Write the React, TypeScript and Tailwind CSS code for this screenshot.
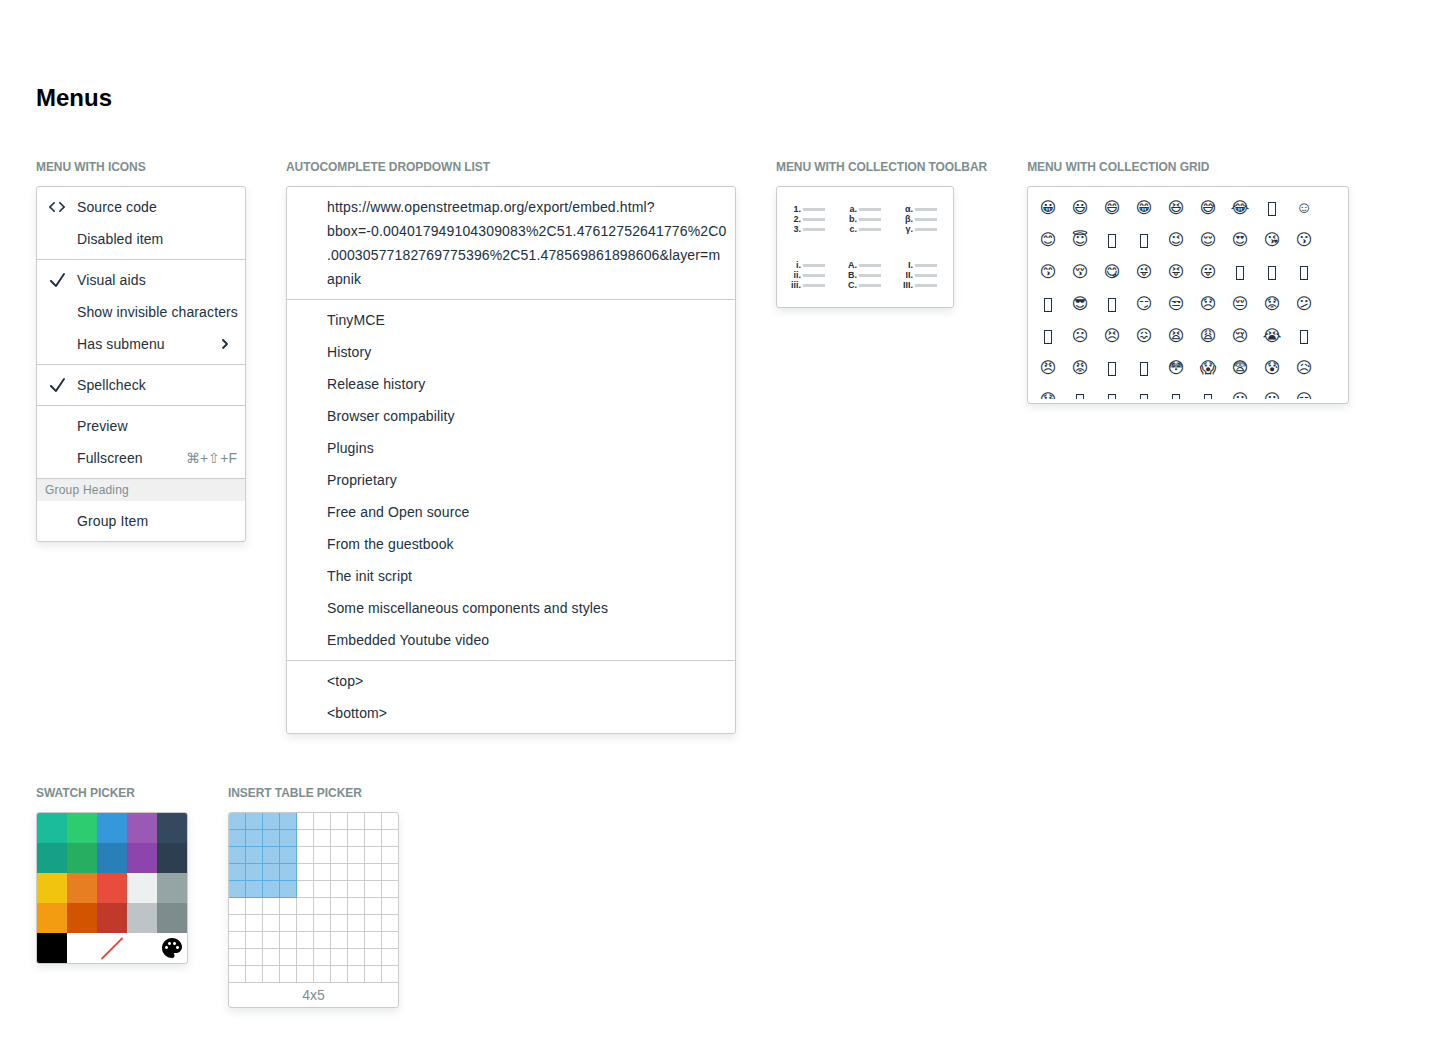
import React from 'react';
import { MdPalette } from 'react-icons/md';

const menuBox = 'bg-white border border-[#cccccc] rounded-[3px] shadow-[0_4px_8px_0_rgba(34,47,62,0.1)] overflow-hidden';
const sectionLabel = 'mb-[11px] text-xs leading-[16px] font-bold text-[#7e8e8e] whitespace-nowrap tracking-[-0.07px]';

const CodeIcon = () => (
  <svg width="24" height="24" viewBox="0 0 24 24" fill="#222f3e">
    <path d="M9.8 15.7c.3.3.3.8 0 1-.3.4-.9.4-1.2 0l-4.4-4.1a.8.8 0 0 1 0-1.2l4.4-4.2c.3-.3.9-.3 1.2 0 .3.3.3.8 0 1.1L6 12l3.8 3.7zm4.4 0c-.3.3-.3.8 0 1 .3.4.9.4 1.2 0l4.4-4.1a.8.8 0 0 0 0-1.2l-4.4-4.2a.8.8 0 0 0-1.2 0c-.3.3-.3.8 0 1.1L18 12l-3.8 3.7z" />
  </svg>
);

const CheckIcon = () => (
  <svg width="24" height="24" viewBox="0 0 24 24" fill="#222f3e">
    <path d="M18.2 5.4a1 1 0 0 1 1.6 1.2l-8 12a1 1 0 0 1-1.5.1l-5-5a1 1 0 1 1 1.4-1.4l4.1 4.1 7.4-11z" />
  </svg>
);

const ChevronIcon = () => (
  <svg className="mr-1" width="16" height="16" viewBox="0 0 16 16" fill="#222f3e">
    <path d="M5.3 3.3a1 1 0 0 1 1.4 0l4 4c.4.4.4 1 0 1.4l-4 4a1 1 0 0 1-1.4-1.4L8.6 8 5.3 4.7a1 1 0 0 1 0-1.4z" />
  </svg>
);

const Item = ({ label, icon, right }: { label: string; icon?: React.ReactNode; right?: React.ReactNode }) => (
  <div className="flex h-8 items-center px-2 text-sm tracking-[0.12px] text-[#222f3e]">
    <div className="mr-2 flex w-6 shrink-0 justify-center">{icon}</div>
    <span className="whitespace-nowrap">{label}</span>
    {right && <div className="ml-auto flex items-center">{right}</div>}
  </div>
);

const Group = ({ children, last }: { children: React.ReactNode; last?: boolean }) => (
  <div className={last ? 'py-1' : 'py-1 border-b border-[#cccccc]'}>{children}</div>
);

const IconsMenu = () => (
  <div className={`${menuBox} w-[210px]`}>
    <Group>
      <Item label="Source code" icon={<CodeIcon />} />
      <Item label="Disabled item" />
    </Group>
    <Group>
      <Item label="Visual aids" icon={<CheckIcon />} />
      <Item label="Show invisible characters" />
      <Item label="Has submenu" right={<ChevronIcon />} />
    </Group>
    <Group>
      <Item label="Spellcheck" icon={<CheckIcon />} />
    </Group>
    <Group>
      <Item label="Preview" />
      <Item label="Fullscreen" right={<span className="tracking-normal text-[#7e8e8e]">⌘+⇧+F</span>} />
    </Group>
    <div className="h-[22px] bg-[#f0f0f0] px-2 text-xs leading-[22px] tracking-[0.2px] text-[#7e8e8e]">Group Heading</div>
    <Group last>
      <Item label="Group Item" />
    </Group>
  </div>
);

const autocompleteLinks = [
  'TinyMCE',
  'History',
  'Release history',
  'Browser compability',
  'Plugins',
  'Proprietary',
  'Free and Open source',
  'From the guestbook',
  'The init script',
  'Some miscellaneous components and styles',
  'Embedded Youtube video',
];

const AutocompleteMenu = () => (
  <div className={`${menuBox} w-[450px]`}>
    <Group>
      <div className="py-1 pr-2 pl-10 text-sm leading-6 tracking-[0.15px] text-[#222f3e] break-words">
        https://www.openstreetmap.org/export/embed.html?bbox=-0.004017949104309083%2C51.47612752641776%2C0.00030577182769775396%2C51.478569861898606&amp;layer=mapnik
      </div>
    </Group>
    <Group>
      {autocompleteLinks.map(link => (
        <Item key={link} label={link} />
      ))}
    </Group>
    <Group last>
      <Item label="<top>" />
      <Item label="<bottom>" />
    </Group>
  </div>
);

const listStyles = [
  ['1.', '2.', '3.'],
  ['a.', 'b.', 'c.'],
  ['α.', 'β.', 'γ.'],
  ['i.', 'ii.', 'iii.'],
  ['A.', 'B.', 'C.'],
  ['I.', 'II.', 'III.'],
];

const ListIcon = ({ marks }: { marks: string[] }) => (
  <div className="flex h-14 w-14 flex-col items-end justify-center gap-[2px] pr-[12px]">
    {marks.map(mark => (
      <div key={mark} className="flex h-2 items-center">
        <span className="mr-[2px] text-[9px] leading-2 font-bold text-[#222f3e]">{mark}</span>
        <span className="h-[3px] w-[22px] bg-[#cfd2d5]" />
      </div>
    ))}
  </div>
);

const ToolbarMenu = () => (
  <div className={`${menuBox} w-[178px] p-1`}>
    <div className="flex flex-wrap">
      {listStyles.map(marks => (
        <ListIcon key={marks[0]} marks={marks} />
      ))}
    </div>
  </div>
);

// '' stands for a character the font has no glyph for, shown as an empty box
const emojis = [
  '😀', '😃', '😄', '😁', '😆', '😅', '😂', '', '☺',
  '😊', '😇', '', '', '😉', '😌', '😍', '😘', '😗',
  '😙', '😚', '😋', '😜', '😝', '😛', '', '', '',
  '', '😎', '', '😏', '😒', '😞', '😔', '😟', '😕',
  '', '☹', '😣', '😖', '😫', '😩', '😢', '😭', '',
  '😠', '😡', '', '', '😳', '😱', '😨', '😰', '😥',
  '😓', '', '', '', '', '', '😶', '😐', '😑',
];

const EmojiMenu = () => (
  <div className={`${menuBox} w-[322px] p-1`}>
    <div className="h-[208px] overflow-hidden">
      <div className="flex flex-wrap">
        {emojis.map((emoji, i) => (
          <div
            key={i}
            className={
              emoji === '☺'
                ? "flex h-8 w-8 items-center justify-center pt-[2px] font-['Liberation_Sans'] text-base text-[#222f3e]"
                : "flex h-8 w-8 items-center justify-center pt-[2px] font-['DejaVu_Sans'] text-base text-[#222f3e]"
            }
          >
            {emoji ? emoji + '\uFE0E' : <span className="mt-[1px] h-[14px] w-[8px] border border-[#222f3e]" />}
          </div>
        ))}
      </div>
    </div>
  </div>
);

const swatches = [
  '#1abc9c', '#2ecc71', '#3498db', '#9b59b6', '#34495e',
  '#16a085', '#27ae60', '#2980b9', '#8e44ad', '#2c3e50',
  '#f1c40f', '#e67e22', '#e74c3c', '#ecf0f1', '#95a5a6',
  '#f39c12', '#d35400', '#c0392b', '#bdc3c7', '#7f8c8d',
];

const SwatchMenu = () => (
  <div className={`${menuBox} w-[152px]`}>
    <div className="flex flex-wrap">
      {swatches.map(color => (
        <div key={color} className="h-[30px] w-[30px]" style={{ backgroundColor: color }} />
      ))}
      <div className="h-[30px] w-[30px] bg-black" />
      <div className="h-[30px] w-[30px]" />
      <div className="flex h-[30px] w-[30px] items-center justify-center">
        <svg width="24" height="24" viewBox="0 0 24 24">
          <path d="M2 22.5 22 2.5" stroke="#e74c3c" strokeWidth="1.8" strokeLinecap="round" />
        </svg>
      </div>
      <div className="h-[30px] w-[30px]" />
      <div className="flex h-[30px] w-[30px] items-center justify-center">
        <MdPalette size={24} color="#000" />
      </div>
    </div>
  </div>
);

const TablePicker = () => (
  <div className={`${menuBox} w-[171px]`}>
    <div className="flex w-[170px] flex-wrap">
      {Array.from({ length: 100 }).map((_, i) => {
        const selected = i % 10 < 4 && i < 50;
        return (
          <div
            key={i}
            className={
              selected
                ? 'h-[17px] w-[17px] border-r border-b border-[#5dade2] bg-[#99cbec]'
                : 'h-[17px] w-[17px] border-r border-b border-[#cccccc]'
            }
          />
        );
      })}
    </div>
    <div className="h-6 text-center text-sm leading-6 text-[#7e8e8e]">4x5</div>
  </div>
);

const Section = ({ label, children }: { label: string; children: React.ReactNode }) => (
  <div className="flex flex-col items-start">
    <div className={sectionLabel}>{label}</div>
    {children}
  </div>
);

export default function App() {
  return (
    <div className="min-h-[1044px] bg-white px-9 pt-[84px] font-['Liberation_Sans',sans-serif]">
      <h1 className="mb-[47px] text-2xl leading-[28px] font-bold text-black">Menus</h1>
      <div className="mb-[51px] flex items-start gap-10">
        <Section label="MENU WITH ICONS"><IconsMenu /></Section>
        <Section label="AUTOCOMPLETE DROPDOWN LIST"><AutocompleteMenu /></Section>
        <Section label="MENU WITH COLLECTION TOOLBAR"><ToolbarMenu /></Section>
        <Section label="MENU WITH COLLECTION GRID"><EmojiMenu /></Section>
      </div>
      <div className="flex items-start gap-10">
        <Section label="SWATCH PICKER"><SwatchMenu /></Section>
        <Section label="INSERT TABLE PICKER"><TablePicker /></Section>
      </div>
    </div>
  );
}
